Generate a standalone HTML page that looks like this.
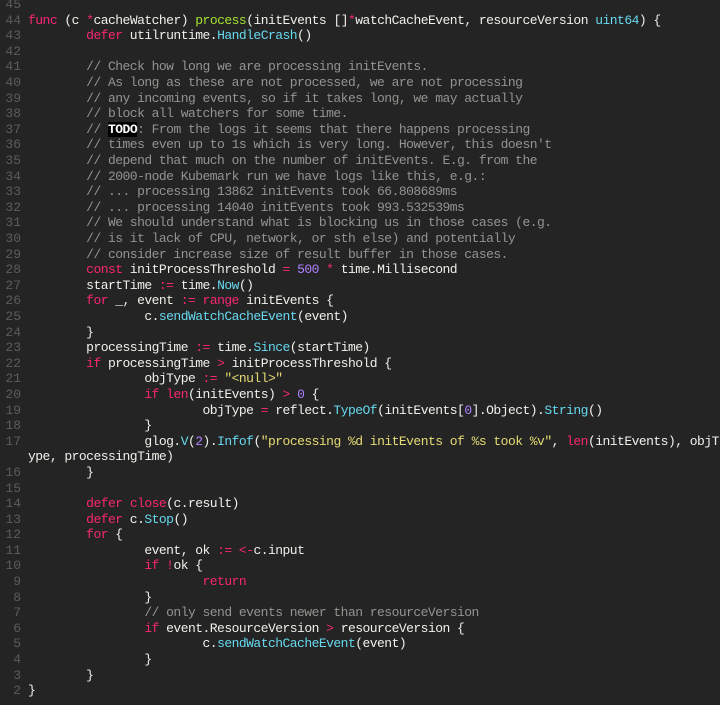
<!DOCTYPE html>
<html><head><meta charset="utf-8"><style>
html,body{margin:0;padding:0;background:#242424;width:720px;height:705px;overflow:hidden}
.c{position:absolute;top:-2.9px;left:0;font-family:"Liberation Mono",monospace;font-size:13px;letter-spacing:-0.53px;line-height:15.6px;color:#f0f0ea;tab-size:8}
.r{position:relative;height:15.6px;white-space:pre}
.n{position:absolute;left:0;width:21px;text-align:right;color:#5c5c5c;letter-spacing:0}
.t{position:absolute;left:28px;white-space:pre}
.k{color:#f92672}.f{color:#a6e22e}.b{color:#66d9ef}.m{color:#939390}.p{color:#ae81ff}.s{color:#e6db74}
.td{background:#000;color:#fff;font-weight:bold}
</style></head><body><div class="c">
<div class="r"><span class="n">45</span><span class="t"></span></div>
<div class="r"><span class="n">44</span><span class="t"><span class="k">func</span> (c <span class="k">*</span>cacheWatcher) <span class="f">process</span>(initEvents []<span class="k">*</span>watchCacheEvent, resourceVersion <span class="b">uint64</span>) {</span></div>
<div class="r"><span class="n">43</span><span class="t">	<span class="k">defer</span> utilruntime.<span class="b">HandleCrash</span>()</span></div>
<div class="r"><span class="n">42</span><span class="t"></span></div>
<div class="r"><span class="n">41</span><span class="t">	<span class="m">// Check how long we are processing initEvents.</span></span></div>
<div class="r"><span class="n">40</span><span class="t">	<span class="m">// As long as these are not processed, we are not processing</span></span></div>
<div class="r"><span class="n">39</span><span class="t">	<span class="m">// any incoming events, so if it takes long, we may actually</span></span></div>
<div class="r"><span class="n">38</span><span class="t">	<span class="m">// block all watchers for some time.</span></span></div>
<div class="r"><span class="n">37</span><span class="t">	<span class="m">// <span class="td">TODO</span>: From the logs it seems that there happens processing</span></span></div>
<div class="r"><span class="n">36</span><span class="t">	<span class="m">// times even up to 1s which is very long. However, this doesn't</span></span></div>
<div class="r"><span class="n">35</span><span class="t">	<span class="m">// depend that much on the number of initEvents. E.g. from the</span></span></div>
<div class="r"><span class="n">34</span><span class="t">	<span class="m">// 2000-node Kubemark run we have logs like this, e.g.:</span></span></div>
<div class="r"><span class="n">33</span><span class="t">	<span class="m">// ... processing 13862 initEvents took 66.808689ms</span></span></div>
<div class="r"><span class="n">32</span><span class="t">	<span class="m">// ... processing 14040 initEvents took 993.532539ms</span></span></div>
<div class="r"><span class="n">31</span><span class="t">	<span class="m">// We should understand what is blocking us in those cases (e.g.</span></span></div>
<div class="r"><span class="n">30</span><span class="t">	<span class="m">// is it lack of CPU, network, or sth else) and potentially</span></span></div>
<div class="r"><span class="n">29</span><span class="t">	<span class="m">// consider increase size of result buffer in those cases.</span></span></div>
<div class="r"><span class="n">28</span><span class="t">	<span class="k">const</span> initProcessThreshold <span class="k">=</span> <span class="p">500</span> <span class="k">*</span> time.Millisecond</span></div>
<div class="r"><span class="n">27</span><span class="t">	startTime <span class="k">:=</span> time.<span class="b">Now</span>()</span></div>
<div class="r"><span class="n">26</span><span class="t">	<span class="k">for</span> _, event <span class="k">:=</span> <span class="k">range</span> initEvents {</span></div>
<div class="r"><span class="n">25</span><span class="t">		c.<span class="b">sendWatchCacheEvent</span>(event)</span></div>
<div class="r"><span class="n">24</span><span class="t">	}</span></div>
<div class="r"><span class="n">23</span><span class="t">	processingTime <span class="k">:=</span> time.<span class="b">Since</span>(startTime)</span></div>
<div class="r"><span class="n">22</span><span class="t">	<span class="k">if</span> processingTime <span class="k">&gt;</span> initProcessThreshold {</span></div>
<div class="r"><span class="n">21</span><span class="t">		objType <span class="k">:=</span> <span class="s">"&lt;null&gt;"</span></span></div>
<div class="r"><span class="n">20</span><span class="t">		<span class="k">if</span> <span class="k">len</span>(initEvents) <span class="k">&gt;</span> <span class="p">0</span> {</span></div>
<div class="r"><span class="n">19</span><span class="t">			objType <span class="k">=</span> reflect.<span class="b">TypeOf</span>(initEvents[<span class="p">0</span>].Object).<span class="b">String</span>()</span></div>
<div class="r"><span class="n">18</span><span class="t">		}</span></div>
<div class="r"><span class="n">17</span><span class="t">		glog.<span class="b">V</span>(<span class="p">2</span>).<span class="b">Infof</span>(<span class="s">"processing %d initEvents of %s took %v"</span>, <span class="k">len</span>(initEvents), objT</span></div>
<div class="r"><span class="t">ype, processingTime)</span></div>
<div class="r"><span class="n">16</span><span class="t">	}</span></div>
<div class="r"><span class="n">15</span><span class="t"></span></div>
<div class="r"><span class="n">14</span><span class="t">	<span class="k">defer</span> <span class="k">close</span>(c.result)</span></div>
<div class="r"><span class="n">13</span><span class="t">	<span class="k">defer</span> c.<span class="b">Stop</span>()</span></div>
<div class="r"><span class="n">12</span><span class="t">	<span class="k">for</span> {</span></div>
<div class="r"><span class="n">11</span><span class="t">		event, ok <span class="k">:=</span> <span class="k">&lt;-</span>c.input</span></div>
<div class="r"><span class="n">10</span><span class="t">		<span class="k">if</span> <span class="k">!</span>ok {</span></div>
<div class="r"><span class="n">9</span><span class="t">			<span class="k">return</span></span></div>
<div class="r"><span class="n">8</span><span class="t">		}</span></div>
<div class="r"><span class="n">7</span><span class="t">		<span class="m">// only send events newer than resourceVersion</span></span></div>
<div class="r"><span class="n">6</span><span class="t">		<span class="k">if</span> event.ResourceVersion <span class="k">&gt;</span> resourceVersion {</span></div>
<div class="r"><span class="n">5</span><span class="t">			c.<span class="b">sendWatchCacheEvent</span>(event)</span></div>
<div class="r"><span class="n">4</span><span class="t">		}</span></div>
<div class="r"><span class="n">3</span><span class="t">	}</span></div>
<div class="r"><span class="n">2</span><span class="t">}</span></div>
</div></body></html>
